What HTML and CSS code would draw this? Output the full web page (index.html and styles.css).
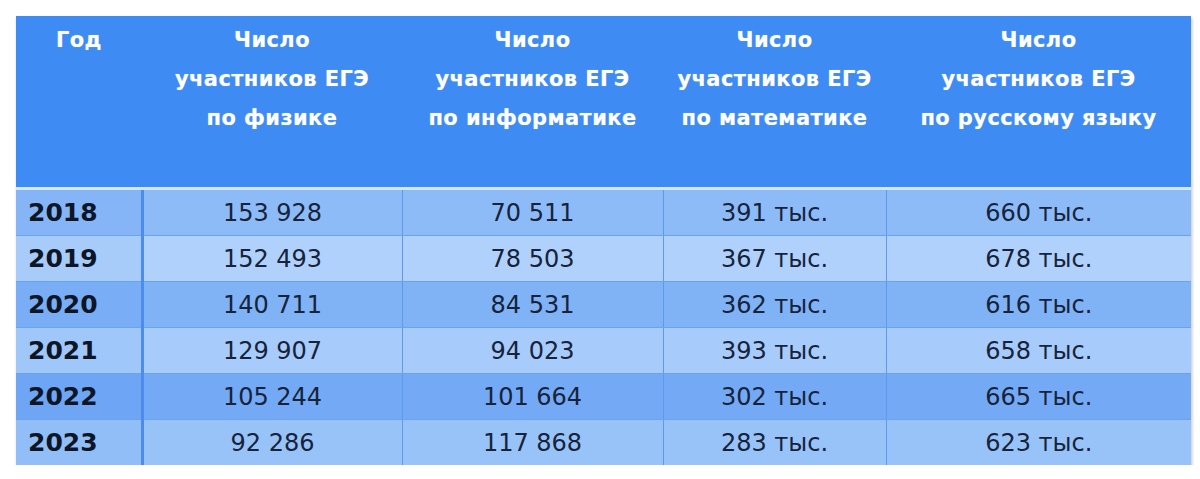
FILE: index.html
```html
<!DOCTYPE html>
<html lang="ru">
<head>
<meta charset="utf-8">
<link rel="stylesheet" href="styles.css">
</head>
<body>
<div class="page">
  <table class="ege">
    <colgroup>
      <col class="c-year"><col class="c-phys"><col class="c-inf"><col class="c-math"><col class="c-rus">
    </colgroup>
    <thead>
      <tr>
        <th>Год</th>
        <th>Число<br>участников ЕГЭ<br>по физике</th>
        <th>Число<br>участников ЕГЭ<br>по информатике</th>
        <th>Число<br>участников ЕГЭ<br>по математике</th>
        <th>Число<br>участников ЕГЭ<br>по русскому языку</th>
      </tr>
    </thead>
    <tbody>
      <tr class="r1"><td>2018</td><td>153 928</td><td>70 511</td><td>391 тыс.</td><td>660 тыс.</td></tr>
      <tr class="r2"><td>2019</td><td>152 493</td><td>78 503</td><td>367 тыс.</td><td>678 тыс.</td></tr>
      <tr class="r3"><td>2020</td><td>140 711</td><td>84 531</td><td>362 тыс.</td><td>616 тыс.</td></tr>
      <tr class="r4"><td>2021</td><td>129 907</td><td>94 023</td><td>393 тыс.</td><td>658 тыс.</td></tr>
      <tr class="r5"><td>2022</td><td>105 244</td><td>101 664</td><td>302 тыс.</td><td>665 тыс.</td></tr>
      <tr class="r6"><td>2023</td><td>92 286</td><td>117 868</td><td>283 тыс.</td><td>623 тыс.</td></tr>
    </tbody>
  </table>
</div>
</body>
</html>
```

FILE: styles.css
```css
html, body {
  margin: 0;
  padding: 0;
  background: #ffffff;
}

.page {
  padding: 16px 0 0 16px;
}

.ege {
  border-collapse: collapse;
  table-layout: fixed;
  width: 1175px;
  font-family: "DejaVu Sans", Verdana, sans-serif;
  box-shadow: 1px 2px 3px rgba(60, 80, 120, 0.35);
}

.c-year { width: 126px; }
.c-phys { width: 260px; }
.c-inf { width: 261px; }
.c-math { width: 223px; }
.c-rus { width: 305px; }

.ege thead th {
  background: #3e8cf3;
  color: #ffffff;
  font-weight: bold;
  font-size: 21px;
  letter-spacing: 0.4px;
  line-height: 39px;
  height: 172px;
  padding: 5px 0 0 0;
  vertical-align: top;
  text-align: center;
  border-bottom: 3px solid #d4e8ff;
  box-sizing: border-box;
  text-shadow: 0 0 1px rgba(255, 255, 255, 0.4);
}

.ege tbody tr {
  height: 45px;
}

.ege tbody td {
  height: 44px;
  padding: 1px 0 0 0;
  text-align: center;
  font-size: 24px;
  color: #16233a;
  border-bottom: 1px solid #6ba3ef;
  border-left: 1px solid #5d9aec;
  vertical-align: middle;
}

.ege tbody tr:last-child td {
  border-bottom: none;
}

.ege tbody td:first-child {
  text-align: left;
  padding-left: 12px;
  font-weight: bold;
  font-size: 25px;
  color: #0d1626;
  border-left: none;
  border-right: 3px solid #4b8ced;
}

.r1 td { background: #8dbbf8; }
.r2 td { background: #b0d1fb; }
.r3 td { background: #80b2f6; }
.r4 td { background: #a7cbfa; }
.r5 td { background: #74aaf5; }
.r6 td { background: #98c3f8; }

.r1 td:first-child { background: #85b5f7; }
.r2 td:first-child { background: #a8ccfa; }
.r3 td:first-child { background: #79adf5; }
.r4 td:first-child { background: #a0c7f9; }
.r5 td:first-child { background: #6ea5f4; }
.r6 td:first-child { background: #91bef7; }
```
